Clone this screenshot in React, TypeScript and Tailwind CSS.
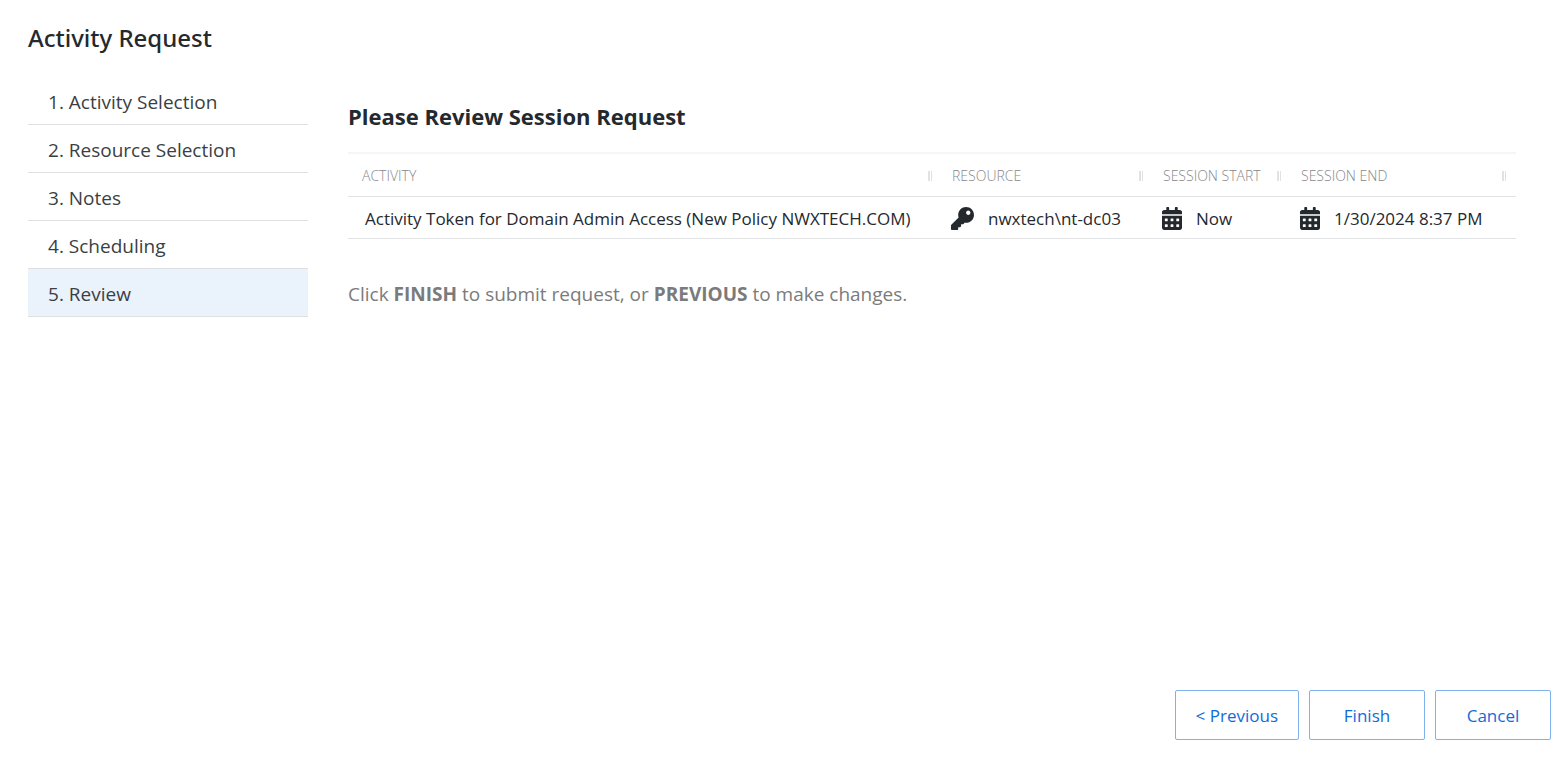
import { FaCalendarAlt, FaKey } from 'react-icons/fa';

const steps = ['Activity Selection', 'Resource Selection', 'Notes', 'Scheduling', 'Review'];

const columns = [
  { label: 'ACTIVITY', className: 'w-auto pr-1.5' },
  { label: 'RESOURCE', className: 'w-[211px] pr-1.5' },
  { label: 'SESSION START', className: 'w-[138px] pr-1.5' },
  { label: 'SESSION END', className: 'w-[229px] pr-2.5' },
];

const buttonClass =
  'h-[50px] min-w-[116px] rounded-xs border border-[#7fb2ec] bg-white px-5 pt-0.5 text-[17px] text-[#0f6cd8] hover:bg-[#eaf2fc]';

export default function App() {
  return (
    <div className="flex min-h-screen flex-col bg-white pt-5 pr-3 pb-[17px] pl-7 font-['Open_Sans',sans-serif] text-[#24292e]">
      <h1 className="font-['Noto_Sans',sans-serif] text-2xl leading-9 font-medium">Activity Request</h1>
      <div className="flex grow items-start gap-10 pt-[21px]">
        <nav aria-label="Request steps" className="w-[280px] shrink-0">
          <ol>
            {steps.map((step, i) => (
              <li key={step}>
                <a
                  href={`#step-${i + 1}`}
                  aria-current={i === 4 ? 'step' : undefined}
                  className={`flex h-12 items-center border-b border-[#dee0e2] px-5 pt-1 text-[19px] text-[#3a3f44] ${i === 4 ? 'bg-[#eaf2fc]' : ''}`}
                >
                  {i + 1}. {step}
                </a>
              </li>
            ))}
          </ol>
        </nav>
        <main className="min-w-0 grow pt-6 pr-[35px]">
          <h2 className="text-[22px] leading-[30px] font-bold">Please Review Session Request</h2>
          <table className="mt-[21px] w-full table-fixed border-separate border-spacing-0 text-left">
            <thead>
              <tr>
                {columns.map(({ label, className }) => (
                  <th
                    key={label}
                    scope="col"
                    className={`h-[45px] border-t-2 border-b border-t-[#f6f6f6] border-b-[#e1e3e5] pt-0.5 pl-3.5 text-sm font-light text-[#85888b] ${className}`}
                  >
                    <div className="flex items-center justify-between whitespace-nowrap">
                      {label}
                      <span className="h-2.5 w-1 border-r border-l-2 border-[#e2e2e2]" />
                    </div>
                  </th>
                ))}
              </tr>
            </thead>
            <tbody>
              <tr className="text-[17px] whitespace-nowrap *:h-[42px] *:border-b *:border-[#e1e3e5] *:pt-0.5">
                <td className="pl-[17px]">Activity Token for Domain Admin Access (New Policy NWXTECH.COM)</td>
                <td className="pl-[13px]">
                  <div className="flex items-center gap-3.5">
                    <FaKey className="size-[23px]" />
                    nwxtech\nt-dc03
                  </div>
                </td>
                <td className="pl-[13px]">
                  <div className="flex items-center gap-3.5">
                    <FaCalendarAlt className="h-[23px] w-5" />
                    Now
                  </div>
                </td>
                <td className="pl-[13px]">
                  <div className="flex items-center gap-3.5">
                    <FaCalendarAlt className="h-[23px] w-5" />
                    1/30/2024 8:37 PM
                  </div>
                </td>
              </tr>
            </tbody>
          </table>
          <p className="mt-[39px] text-[19px] leading-8 text-[#7b7b7b]">
            Click <strong>FINISH</strong> to submit request, or <strong>PREVIOUS</strong> to make changes.
          </p>
        </main>
      </div>
      <footer className="flex justify-end gap-2.5">
        <button type="button" className={buttonClass}>&lt; Previous</button>
        <button type="button" className={buttonClass}>Finish</button>
        <button type="button" className={buttonClass}>Cancel</button>
      </footer>
    </div>
  );
}
